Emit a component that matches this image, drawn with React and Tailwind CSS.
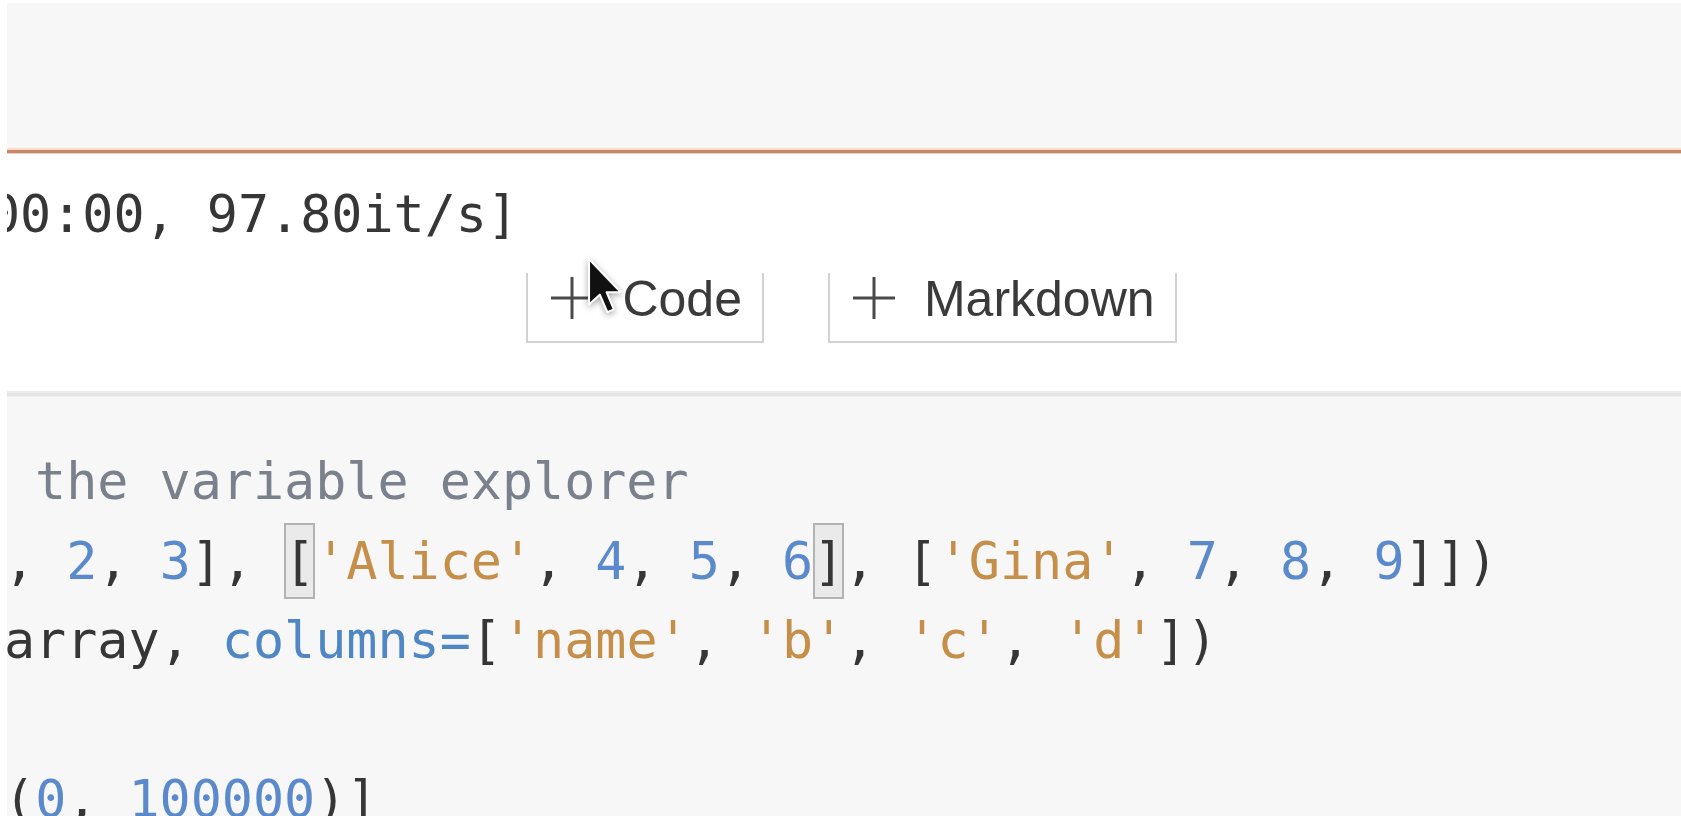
import React from "react";

const mono = "font-['DejaVu_Sans_Mono',monospace]";

const C = {
  txt: "text-[#363636]",
  num: "text-[#5a8acb]",
  str: "text-[#c58f4a]",
  kw: "text-[#4f86c4]",
  com: "text-[#7a808c]",
};

const Match = ({ children }) => (
  <span className="inline-block h-[76px] leading-[76px] bg-[#eaeaea] shadow-[inset_0_0_0_2px_#b3b3b3] align-baseline">
    {children}
  </span>
);

const PlusIcon = () => (
  <svg width="44" height="44" viewBox="0 0 44 44" className="mt-[3px] shrink-0">
    <path d="M22 1 V43 M1 22 H43" stroke="#4a4a4a" strokeWidth="3" />
  </svg>
);

const AddButton = ({ label }) => (
  <button className="flex items-start h-[70px] pl-[22px] pr-[20px] gap-[28px] border-x-2 border-b-2 border-[#d2d2d2] bg-white">
    <PlusIcon />
    <span className="mt-[1px] text-[50px] leading-[50px] text-[#3a3a3a] font-['Liberation_Sans',Arial,sans-serif]">
      {label}
    </span>
  </button>
);

const Cursor = () => (
  <svg
    width="36"
    height="60"
    viewBox="0 0 12 20"
    className="absolute left-[586px] top-[256px] drop-shadow-[0_2px_3px_rgba(0,0,0,0.35)]"
  >
    <path
      d="M1 1 L1 16.2 L4.6 12.9 L7.1 18.7 L9.3 17.8 L6.9 12.1 L11.6 12.1 Z"
      fill="#111"
      stroke="#ffffff"
      strokeWidth="0.7"
      strokeLinejoin="round"
    />
  </svg>
);

export default function App() {
  return (
    <div className="relative h-[816px] w-full overflow-hidden bg-white pl-[7px] pt-[3px]">
      {/* toolbar strip */}
      <div className="h-[145px] bg-[#f7f7f7]" />
      <div className="h-[2px] bg-[#fbdcc8]" />
      <div className="h-[3px] bg-[#c6876b]" />
      <div className="h-[1px] bg-[#edd0c2]" />

      {/* output area */}
      <div className="h-[237px] overflow-hidden bg-white">
        <div className={`${mono} pt-[30px] -ml-[18px] text-[51.7px] leading-[60px] whitespace-pre ${C.txt}`}>
          00:00, 97.80it/s]
        </div>
        <div className="mt-[29px] ml-[15px] flex justify-center gap-[64px]">
          <AddButton label="Code" />
          <AddButton label="Markdown" />
        </div>
      </div>

      <div className="h-[2px] bg-[#ececec]" />
      <div className="h-[3px] bg-[#e3e3e3]" />
      <div className="h-[1px] bg-[#efefef]" />

      {/* code cell */}
      <div className="h-[420px] overflow-hidden bg-[#f7f7f7]">
        <pre className={`${mono} pt-[45px] -ml-[3px] text-[51.7px] leading-[79.5px] whitespace-pre ${C.txt}`}>
          <div className={C.com}> the variable explorer</div>
          <div>
            <span>, </span>
            <span className={C.num}>2</span>
            <span>, </span>
            <span className={C.num}>3</span>
            <span>], </span>
            <Match>[</Match>
            <span className={C.str}>'Alice'</span>
            <span>, </span>
            <span className={C.num}>4</span>
            <span>, </span>
            <span className={C.num}>5</span>
            <span>, </span>
            <span className={C.num}>6</span>
            <Match>]</Match>
            <span>, [</span>
            <span className={C.str}>'Gina'</span>
            <span>, </span>
            <span className={C.num}>7</span>
            <span>, </span>
            <span className={C.num}>8</span>
            <span>, </span>
            <span className={C.num}>9</span>
            <span>]])</span>
          </div>
          <div>
            <span>array, </span>
            <span className={C.kw}>columns=</span>
            <span>[</span>
            <span className={C.str}>'name'</span>
            <span>, </span>
            <span className={C.str}>'b'</span>
            <span>, </span>
            <span className={C.str}>'c'</span>
            <span>, </span>
            <span className={C.str}>'d'</span>
            <span>])</span>
          </div>
          <div> </div>
          <div>
            <span>(</span>
            <span className={C.num}>0</span>
            <span>, </span>
            <span className={C.num}>100000</span>
            <span>)]</span>
          </div>
        </pre>
      </div>

      <Cursor />
    </div>
  );
}
